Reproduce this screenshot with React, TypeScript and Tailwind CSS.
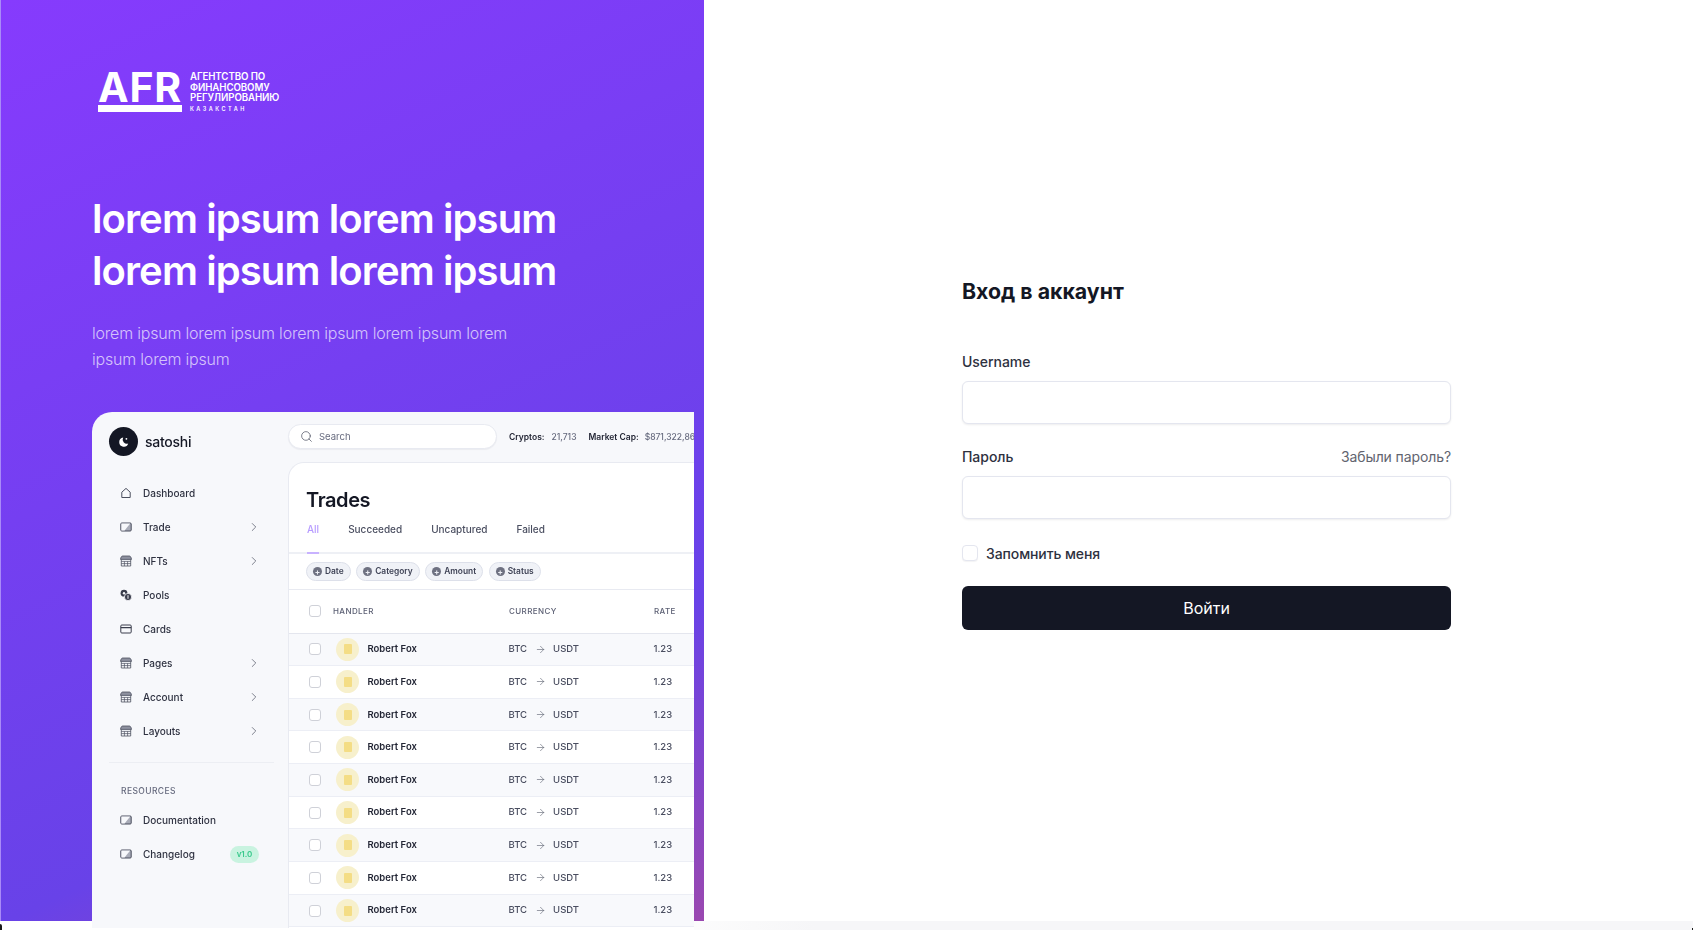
import { ChevronRight, Search, ArrowRight } from "lucide-react";

const font = { fontFamily: "Inter, 'Noto Sans', sans-serif" };

function HomeIcon() {
  return (
    <svg width="12" height="12" viewBox="0 0 12 12" fill="none" stroke="#4b4f5e" strokeWidth="1">
      <path d="M1.8 5.2 6 1.4l4.2 3.8v5.3H1.8z" strokeLinejoin="round" />
    </svg>
  );
}

function WalletIcon() {
  return (
    <svg width="12" height="12" viewBox="0 0 12 12" fill="none">
      <rect x="0.8" y="2" width="10.4" height="8" rx="1" fill="#a9acb8" stroke="#4b4f5e" strokeWidth="1" />
      <path d="M1.4 2.6h8.8L4.6 9.4H1.4z" fill="#f7f8fb" />
    </svg>
  );
}

function StoreIcon() {
  return (
    <svg width="12" height="12" viewBox="0 0 12 12" fill="none" stroke="#4b4f5e" strokeWidth="0.8">
      <path d="M2.6 1h6.8c1 0 1.9 1.5 2.1 3.4H.5C.7 2.5 1.6 1 2.6 1z" fill="#8e919f" />
      <path d="M1.3 4.6v6.4h9.4V4.6" />
      <path d="M1.3 6.4h9.4M1.3 8.6h9.4M4.4 6.4v4.6M7.6 6.4v4.6" strokeWidth="0.7" />
    </svg>
  );
}

function CoinsIcon() {
  return (
    <svg width="12" height="12" viewBox="0 0 12 12">
      <circle cx="4" cy="4.2" r="3.4" fill="#3a3d4c" />
      <circle cx="4" cy="4.2" r="1.2" fill="#f7f8fb" />
      <circle cx="8" cy="8" r="3.6" fill="#3a3d4c" stroke="#f7f8fb" strokeWidth="0.8" />
      <rect x="7.5" y="6.2" width="1" height="3.6" fill="#f7f8fb" />
    </svg>
  );
}

function CardIcon() {
  return (
    <svg width="12" height="12" viewBox="0 0 12 12" fill="none" stroke="#3a3d4c" strokeWidth="1">
      <rect x="0.8" y="2" width="10.4" height="8" rx="1" />
      <path d="M0.8 4.6h10.4" strokeWidth="1.4" />
    </svg>
  );
}

function PlusDot() {
  return (
    <span className="flex h-[9px] w-[9px] items-center justify-center rounded-full bg-[#6e7181] text-[8px] leading-none font-bold text-[#eef0f6]">
      +
    </span>
  );
}

const navItems = [
  { label: "Dashboard", icon: <HomeIcon /> },
  { label: "Trade", icon: <WalletIcon />, arrow: true },
  { label: "NFTs", icon: <StoreIcon />, arrow: true },
  { label: "Pools", icon: <CoinsIcon /> },
  { label: "Cards", icon: <CardIcon /> },
  { label: "Pages", icon: <StoreIcon />, arrow: true },
  { label: "Account", icon: <StoreIcon />, arrow: true },
  { label: "Layouts", icon: <StoreIcon />, arrow: true },
];

const rows = [1, 2, 3, 4, 5, 6, 7, 8, 9];

function Checkbox() {
  return <span className="block h-[12px] w-[12px] shrink-0 rounded-[3px] border border-[#cfd1d8] bg-white" />;
}

function Sidebar() {
  return (
    <div className="flex w-[196px] shrink-0 flex-col pt-[15px]">
      <div className="flex items-center gap-[7px] pl-[17px]">
        <div className="flex h-[29px] w-[29px] items-center justify-center rounded-full bg-[#141724]">
          <svg width="12" height="12" viewBox="0 0 12 12" fill="white">
            <path d="M5.2 1.6a4.6 4.6 0 1 0 5 6A4.2 4.2 0 0 1 5.2 1.6z" />
            <circle cx="8.4" cy="2.8" r="0.9" />
          </svg>
        </div>
        <span className="text-[14px] font-medium tracking-[-0.25px] text-[#141724]">satoshi</span>
      </div>

      <div className="mt-[20px]">
        {navItems.map((item) => (
          <div key={item.label} className="flex h-[34px] items-center pr-[27px] pl-[28px]">
            <span className="w-[23px] shrink-0">{item.icon}</span>
            <span className="flex-1 text-[10px] font-medium text-[#2f3241]">{item.label}</span>
            {item.arrow && <ChevronRight size={14} strokeWidth={1.2} className="text-[#4b4f5e]" />}
          </div>
        ))}
      </div>

      <div className="mt-[14px] ml-[17px] w-[165px] border-t border-[#eceef3]" />

      <div className="mt-[22px] pl-[29px] text-[8.5px] leading-[12px] font-medium tracking-[0.4px] text-[#666a7e]">RESOURCES</div>
      <div className="mt-[6px]">
        <div className="flex h-[34px] items-center pl-[28px]">
          <span className="w-[23px] shrink-0"><WalletIcon /></span>
          <span className="text-[10px] font-medium text-[#2f3241]">Documentation</span>
        </div>
        <div className="flex h-[34px] items-center pr-[29px] pl-[28px]">
          <span className="w-[23px] shrink-0"><WalletIcon /></span>
          <span className="flex-1 text-[10px] font-medium text-[#2f3241]">Changelog</span>
          <span className="flex h-[17px] w-[29px] items-center justify-center rounded-full bg-[#c9f3e0] text-[8px] font-semibold text-[#38c98c]">v1.0</span>
        </div>
      </div>
    </div>
  );
}

function TradesTable() {
  return (
    <div className="mt-[13px] flex-1 overflow-hidden rounded-tl-[16px] border-t border-l border-[#e8eaf1] bg-white">
      <div className="pt-[24px] pl-[17px] text-[20px] leading-[26px] font-semibold tracking-[-0.4px] text-[#141724]">Trades</div>

      <div className="mt-[3px] flex h-[38px] gap-[29px] border-b-2 border-[#eef0f5] pl-[18px] text-[10px] font-medium text-[#4a4e60]">
        <span className="h-[38px] border-b-2 border-[#c8b2ff] leading-[26px] text-[#b79cff]">All</span>
        <span className="leading-[26px]">Succeeded</span>
        <span className="leading-[26px]">Uncaptured</span>
        <span className="leading-[26px]">Failed</span>
      </div>

      <div className="flex h-[36px] items-center gap-[5.5px] border-b border-[#e8eaf1] pl-[17px]">
        {["Date", "Category", "Amount", "Status"].map((chip) => (
          <span key={chip} className="flex h-[19px] items-center gap-[3px] rounded-full border border-[#dde0ea] bg-[#f0f2f7] px-[6px] text-[8.4px] font-semibold text-[#3f4356]">
            <PlusDot />
            {chip}
          </span>
        ))}
      </div>

      <div className="flex h-[43.5px] items-center border-b border-[#e4e6ee] pl-[20px] text-[8px] font-medium tracking-[0.4px] text-[#5c6074]">
        <Checkbox />
        <span className="ml-[12px] w-[176px]">HANDLER</span>
        <span className="w-[145px]">CURRENCY</span>
        <span>RATE</span>
      </div>

      {rows.map((n) => (
        <div key={n} className={`flex h-[32.67px] items-center border-b-[1.5px] border-[#eceef5] pl-[20px] ${n % 2 === 1 ? "bg-[#f8f9fc]" : "bg-white"}`}>
          <Checkbox />
          <div className="ml-[15px] flex h-[23px] w-[23px] shrink-0 items-center justify-center rounded-full bg-[#f7f0cc]">
            <span className="block h-[10px] w-[8px] rounded-[1px] bg-[#f4dd85]" />
          </div>
          <span className="ml-[8.5px] w-[141px] text-[9.5px] font-semibold text-[#232635]">Robert Fox</span>
          <span className="flex w-[145px] items-center text-[9.5px] font-medium text-[#4a4e60]">
            BTC
            <ArrowRight size={11} strokeWidth={1.2} className="mx-[7.5px] text-[#4a4e60]" />
            USDT
          </span>
          <span className="text-[9.5px] font-medium text-[#4a4e60]">1.23</span>
        </div>
      ))}
    </div>
  );
}

function DashboardPreview() {
  return (
    <div className="relative z-10 mt-[40px] flex h-[516px] w-[602px] overflow-hidden rounded-tl-[20px] bg-[#f7f8fb] blur-[0.4px]">
      <Sidebar />
      <div className="flex min-w-0 flex-1 flex-col pt-[12px]">
        <div className="flex h-[25px] items-center">
          <div className="flex h-[25px] w-[209px] shrink-0 items-center gap-[6px] rounded-full border border-[#e8eaf1] bg-white pl-[11px] text-[9.5px] text-[#666a7e] shadow-[0_1px_1px_rgba(20,23,36,0.05)]">
            <Search size={13} strokeWidth={1.3} className="text-[#4a4e60]" />
            <span className="pt-[2px]">Search</span>
          </div>
          <div className="ml-[12px] flex items-center pt-[2px] text-[8.5px] whitespace-nowrap">
            <span className="font-semibold text-[#232635]">Cryptos:</span>
            <span className="ml-[7px] font-medium text-[#666a7e]">21,713</span>
            <span className="ml-[12px] font-semibold text-[#232635]">Market Cap:</span>
            <span className="ml-[6px] font-medium text-[#666a7e]">$871,322,869</span>
          </div>
        </div>
        <TradesTable />
      </div>
    </div>
  );
}

function LoginForm() {
  return (
    <div className="w-[489px] pt-[277px]">
      <h1 className="text-[21.3px] leading-[28px] font-bold text-[#141724]">Вход в аккаунт</h1>

      <label className="mt-[47px] block text-[14px] leading-[20px] font-medium tracking-[-0.05px] text-[#2e3140]">Username</label>
      <input className="mt-[9px] block h-[43px] w-full rounded-[6px] border border-[#e4e6ef] bg-white shadow-[0_1px_2px_rgba(20,23,36,0.08)] outline-none" />

      <div className="mt-[23px] flex justify-between text-[14px] leading-[20px]">
        <label className="font-medium tracking-[-0.05px] text-[#2e3140]">Пароль</label>
        <a className="tracking-[-0.1px] text-[#62646f]">Забыли пароль?</a>
      </div>
      <input type="password" className="mt-[9px] block h-[43px] w-full rounded-[6px] border border-[#e4e6ef] bg-white shadow-[0_1px_2px_rgba(20,23,36,0.08)] outline-none" />

      <div className="mt-[24px] flex h-[20px] items-center gap-[8px]">
        <input type="checkbox" className="h-[16px] w-[16px] appearance-none rounded-[4px] border border-[#e4e6ef] bg-white shadow-[0_1px_1px_rgba(20,23,36,0.05)]" />
        <span className="text-[14px] font-medium tracking-[-0.1px] text-[#2e3140]">Запомнить меня</span>
      </div>

      <button className="mt-[23px] h-[44px] w-full rounded-[6px] bg-[#141724] text-[16px] text-white">Войти</button>
    </div>
  );
}

export default function App() {
  return (
    <div className="relative h-[930px] w-full overflow-hidden bg-white" style={font}>
      <div className="flex h-[921px]">
        <div className="h-[921px] w-[704px] shrink-0 border-l border-[#a98af8] bg-[linear-gradient(155deg,#863bfd_0%,#6842e8_74%,#9a48b0_100%)] pt-[71px] pl-[91px]">
          {/* Logo */}
          <div className="ml-[6px] flex h-[41px] gap-[8px]">
            <div className="flex w-[84px] flex-col items-center">
              <span className="h-[33px] text-[41px] leading-[33px] font-bold tracking-[0.8px] text-white">AFR</span>
              <span className="mt-[1px] block h-[7px] w-full bg-white" />
            </div>
            <div className="pt-[1px] text-[9.7px] leading-[10.5px] font-semibold tracking-[-0.1px] text-white">
              <div>АГЕНТСТВО ПО</div>
              <div>ФИНАНСОВОМУ</div>
              <div>РЕГУЛИРОВАНИЮ</div>
              <div className="mt-[1px] text-[5.5px] leading-[9px] tracking-[2.5px]">КАЗАКСТАН</div>
            </div>
          </div>

          <h2 className="mt-[81px] w-[560px] text-[40px] leading-[52px] font-semibold tracking-[-0.9px] text-white">
            lorem ipsum lorem ipsum lorem ipsum lorem ipsum
          </h2>
          <p className="mt-[23px] w-[430px] text-[16px] leading-[26px] font-light tracking-[-0.2px] text-white/70">
            lorem ipsum lorem ipsum lorem ipsum lorem ipsum lorem ipsum lorem ipsum
          </p>

          <DashboardPreview />
        </div>

        <div className="flex flex-1 pl-[258px]">
          <LoginForm />
        </div>
      </div>
      <div className="ml-[694px] h-[9px] bg-[linear-gradient(90deg,#fcfcfc,#f6f6f8_120px)]" />
      {/* window corners */}
      <span className="absolute bottom-0 left-0 h-[6px] w-[2px] rounded-tr-full bg-[#1a1a1a]" />
      <span className="absolute right-0 bottom-0 h-[2px] w-[1px] bg-[#1a1a1a]" />
    </div>
  );
}
